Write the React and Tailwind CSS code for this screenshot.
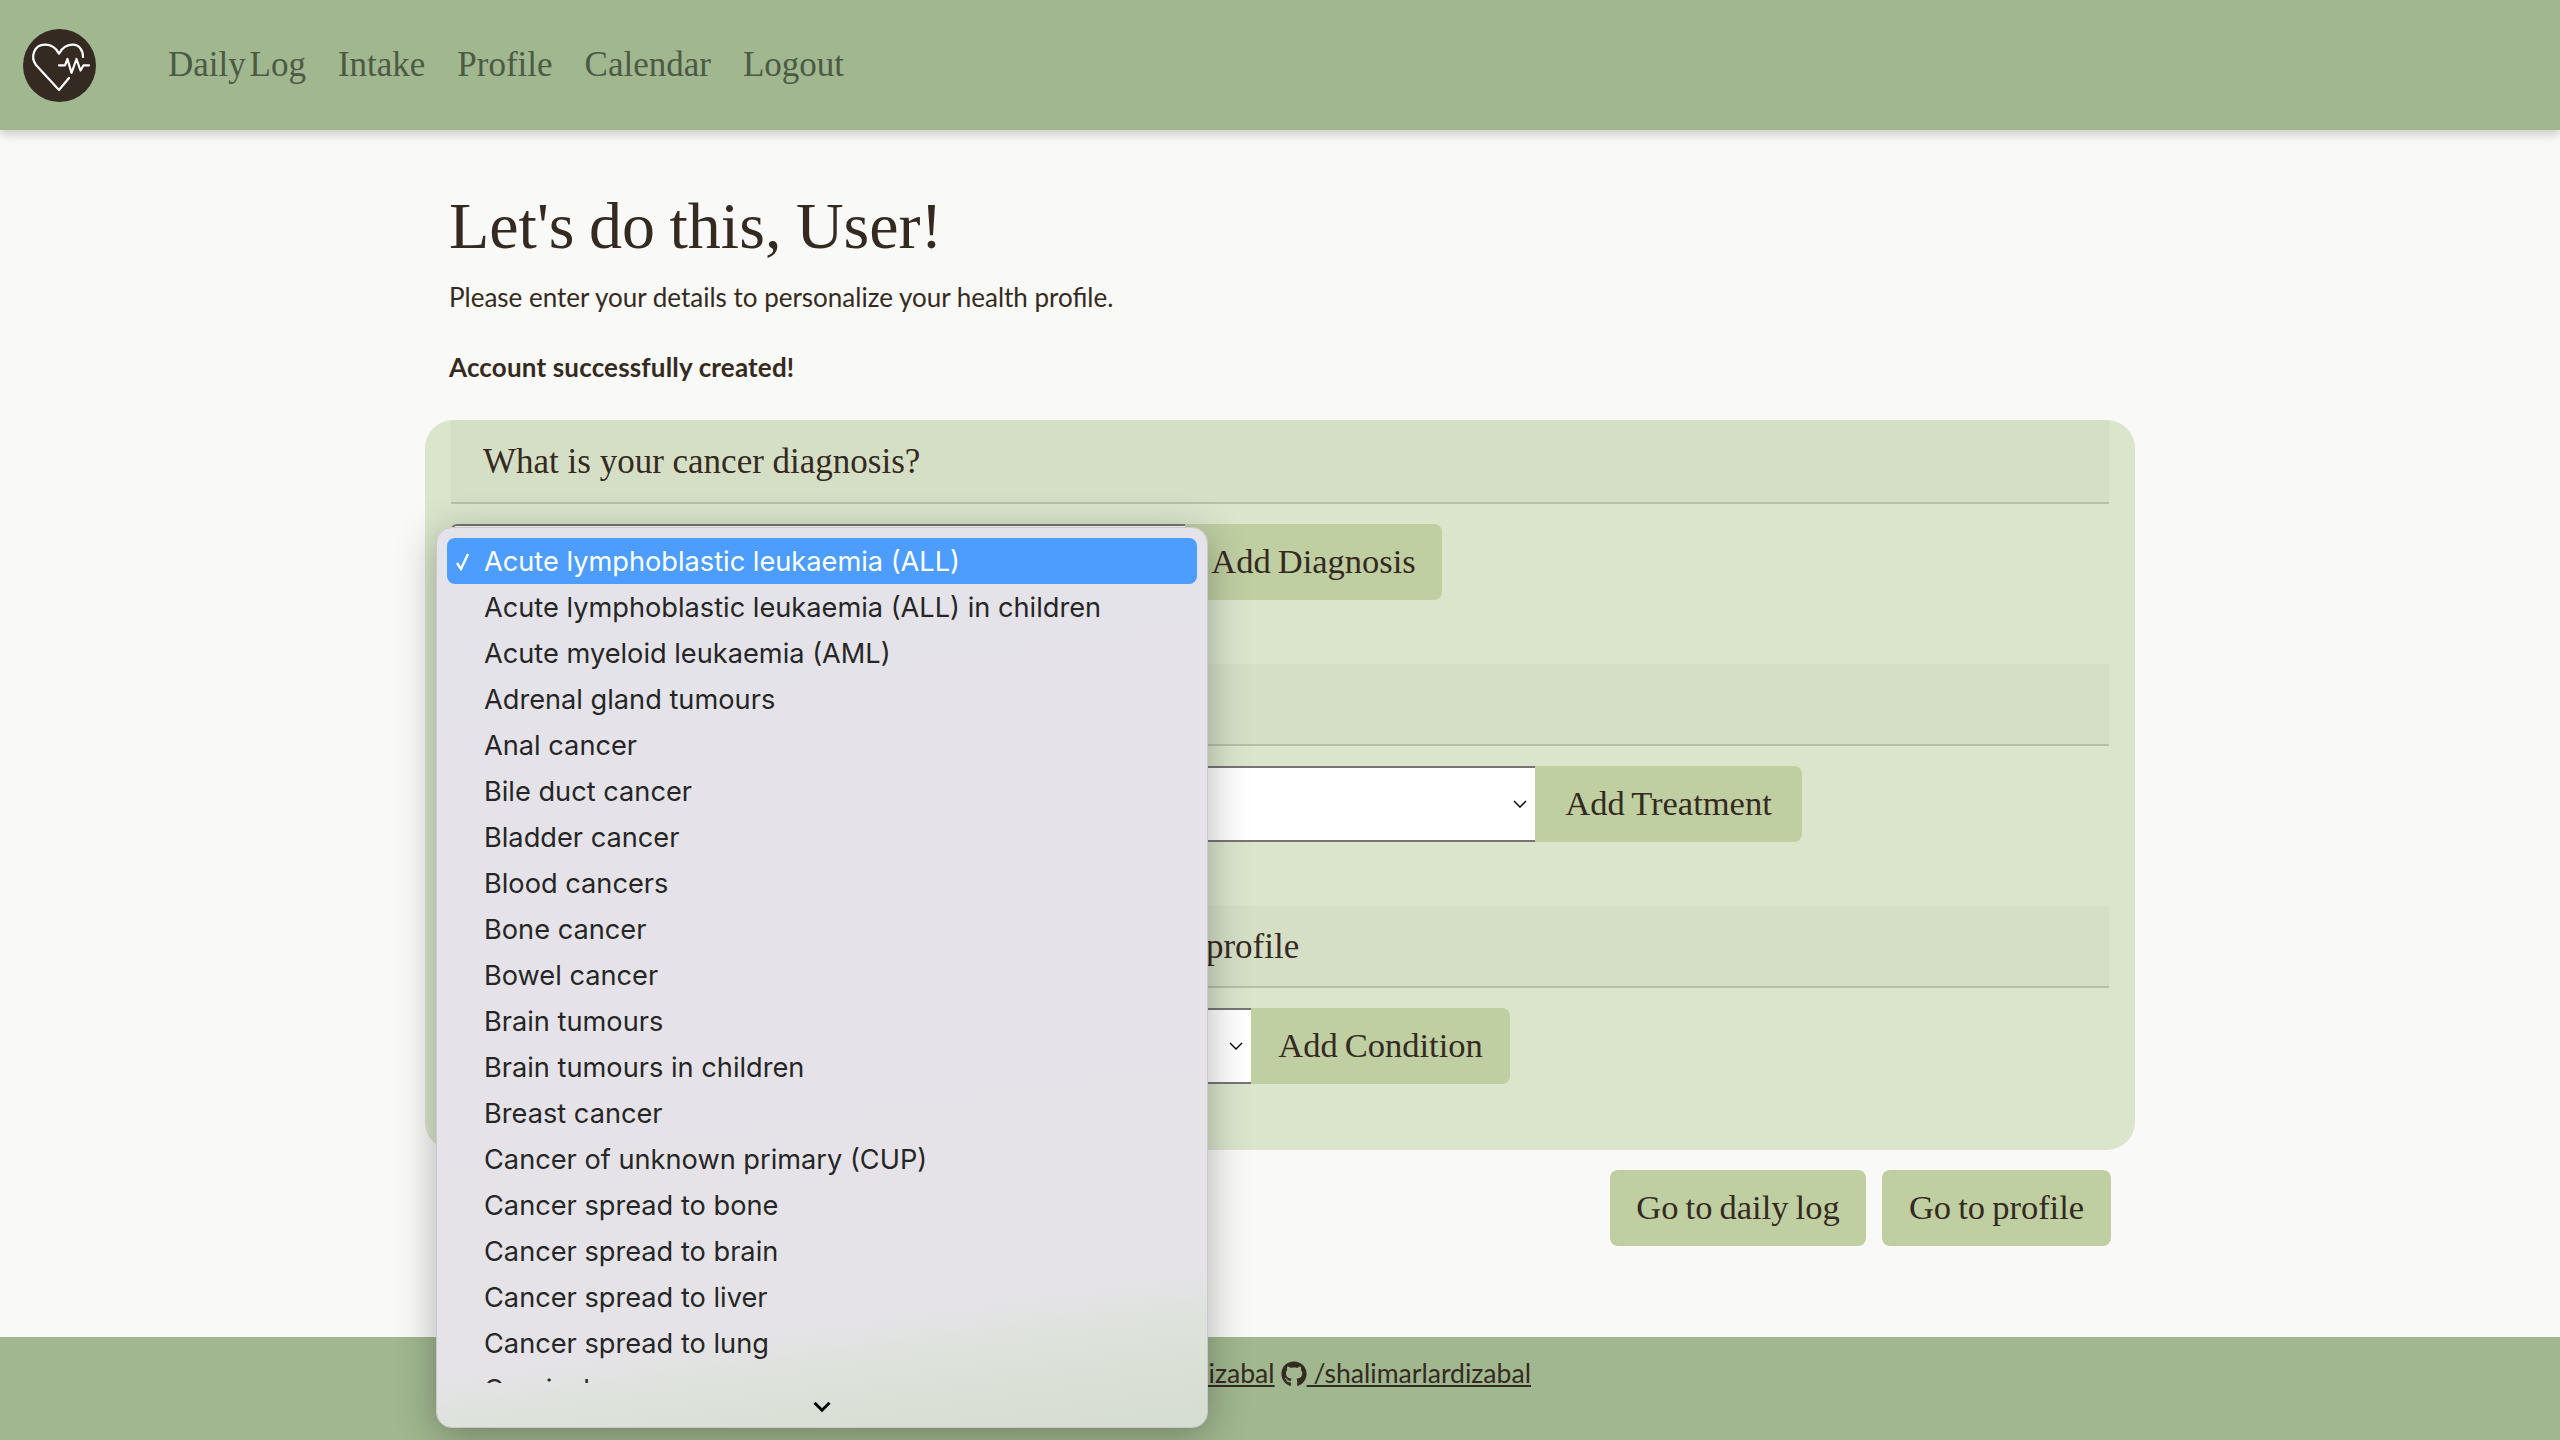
import React from 'react';
import { FaGithub } from 'react-icons/fa';

const options = [
    'Acute lymphoblastic leukaemia (ALL)',
    'Acute lymphoblastic leukaemia (ALL) in children',
    'Acute myeloid leukaemia (AML)',
    'Adrenal gland tumours',
    'Anal cancer',
    'Bile duct cancer',
    'Bladder cancer',
    'Blood cancers',
    'Bone cancer',
    'Bowel cancer',
    'Brain tumours',
    'Brain tumours in children',
    'Breast cancer',
    'Cancer of unknown primary (CUP)',
    'Cancer spread to bone',
    'Cancer spread to brain',
    'Cancer spread to liver',
    'Cancer spread to lung',
    'Cervical cancer',
];

const sections = [
    { question: 'What is your cancer diagnosis?', button: 'Add Diagnosis', selectWidth: 'w-[734px]', buttonWidth: 'w-[257px]', headerHeight: 'h-[84px]', titleSpacing: '' },
    { question: 'What treatment are you receiving?', button: 'Add Treatment', selectWidth: 'w-[1084px]', buttonWidth: 'w-[267px]', headerHeight: 'h-[82px]', titleSpacing: '' },
    { question: 'Add any other preexisting health conditions to your profile', button: 'Add Condition', selectWidth: 'w-[800px]', buttonWidth: 'w-[259px]', headerHeight: 'h-[82px]', titleSpacing: '[word-spacing:-1px]' },
];

const serif = "font-['Liberation_Serif',serif]";

const Logo = () => (
    <svg viewBox="0 0 73 73" className="w-[73px] h-[73px]" fill="none" stroke="#ffffff" strokeWidth="2.2" strokeLinecap="round" strokeLinejoin="round">
        <circle cx="36.5" cy="36.5" r="36.5" fill="#352a21" stroke="none" />
        <path d="M46 49 L36 61 L13 36 C7 28 11 15.7 22 15.7 C28 15.7 33 19 36 24.7 C39 19 44 15.7 50 15.7 C56 15.7 60 21 60 28" />
        <path d="M36 36.3 H42 L44.5 30 L48.5 44 L53.5 30 L57.5 41.5 L60.5 36.3 H66" />
    </svg>
);

const Chevron = ({ className, weight = 1.6 }) => (
    <svg viewBox="0 0 16 10" className={className} fill="none" stroke="currentColor" strokeWidth={weight}>
        <path d="M2 2 L8 8 L14 2" />
    </svg>
);

const Section = ({ question, button, selectWidth, buttonWidth, headerHeight, titleSpacing }) => (
    <section>
        <div className={`${headerHeight} flex items-center px-[32px] pt-[2px] bg-[#d5dfc6] border-b-2 border-[#b5c0a8]`}>
            <h2 className={`${serif} ${titleSpacing} text-[35px] text-[#352a21] whitespace-nowrap`}>{question}</h2>
        </div>
        <div className="flex mt-[20px] h-[76px]">
            <div className={`${selectWidth} bg-white border-y-2 border-l-2 border-[#767676] rounded-l-[6px] flex items-center justify-end pr-[7px]`}>
                <Chevron className="w-[16px] h-[10px] text-black" weight={1.4} />
            </div>
            <button className={`${serif} ${buttonWidth} text-[34.5px] [word-spacing:-1.5px] text-[#352a21] bg-[#bfcfa2] rounded-r-[8px]`}>{button}</button>
        </div>
    </section>
);

const Dropdown = () => (
    <div className="absolute left-[436px] top-[527px] w-[772px] h-[901px] rounded-[16px] bg-[linear-gradient(172deg,#e5e3ea_0%,#e5e3e8_84%,#dde2da_90%,#d5dcd0_100%)] shadow-[0_8px_40px_rgba(0,0,0,0.3)] border border-[#c9c8cc] px-[10px] pt-[10px] font-['Inter',sans-serif] text-[27.2px] text-[#262626]">
        <div className="h-[845px] overflow-hidden">
            {options.map((option, i) => (
                <div key={option} className={`h-[46px] flex items-center pl-[37px] pt-[2px] relative rounded-[8px] ${i === 0 ? 'bg-[#4c9dff] text-white' : ''}`}>
                    {i === 0 && (
                        <svg viewBox="0 0 16 18" className="absolute left-[8px] top-[15px] w-[16px] h-[18px]" fill="none" stroke="#ffffff" strokeWidth="2.4">
                            <path d="M2 10 L6 16 L13 1" />
                        </svg>
                    )}
                    {option}
                </div>
            ))}
        </div>
        <div className="flex justify-center pt-[17px]">
            <Chevron className="w-[20px] h-[13px] text-black" weight={2.4} />
        </div>
    </div>
);

const App = () => {
    return (
        <div className="relative min-h-screen flex flex-col bg-[#f9f9f7] font-['Lato',sans-serif] text-[#352a21]">
            <header className="h-[130px] shrink-0 bg-[#a0b78f] shadow-[0_4px_10px_rgba(0,0,0,0.2)] flex items-center pl-[23px]">
                <Logo />
                <nav className={`${serif} flex gap-[32px] ml-[72px] text-[35px] [word-spacing:-5px] text-[#4c5a44]`}>
                    <a>Daily Log</a>
                    <a>Intake</a>
                    <a>Profile</a>
                    <a>Calendar</a>
                    <a>Logout</a>
                </nav>
            </header>

            <main className="w-[1710px] mx-auto pt-[62px]">
                <div className="px-[24px]">
                    <h1 className={`${serif} text-[66px] leading-[68px] [word-spacing:-2px]`}>Let's do this, User!</h1>
                    <p className="text-[26px] mt-[19px] leading-[36px]">Please enter your details to personalize your health profile.</p>
                    <p className="text-[26px] tracking-[0.17px] font-bold mt-[34px] leading-[36px]">Account successfully created!</p>
                </div>
                <div className="mt-[35px] h-[730px] bg-[#dbe5cc] rounded-[28px] px-[26px] flex flex-col gap-[64px]">
                    {sections.map((s) => (
                        <Section key={s.button} {...s} />
                    ))}
                </div>
                <div className="flex justify-end gap-[16px] mt-[20px] pr-[24px]">
                    <button className={`${serif} h-[76px] w-[256px] text-[34.5px] [word-spacing:-1.5px] bg-[#bfcfa2] rounded-[8px]`}>Go to daily log</button>
                    <button className={`${serif} h-[76px] w-[229px] text-[34.5px] [word-spacing:-1.5px] bg-[#bfcfa2] rounded-[8px]`}>Go to profile</button>
                </div>
            </main>

            <footer className="mt-auto h-[103px] bg-[#a0b78f] flex justify-center items-start pt-[17px] pl-[28px] text-[26.6px] gap-[6px]">
                <a className="underline">/shalimarlardizabal</a>
                <span className="flex items-center">
                    <FaGithub className="w-[26px] h-[26px]" />
                    <a className="underline whitespace-pre"> /shalimarlardizabal</a>
                </span>
            </footer>

            <Dropdown />
        </div>
    );
};

export default App;
